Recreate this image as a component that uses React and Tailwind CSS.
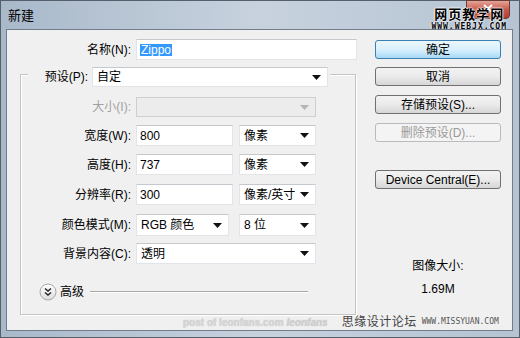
import React from 'react';

const FONT = "font-['Liberation_Sans','Noto_Sans_CJK_SC',sans-serif]";

function Arrow({ disabled }) {
  return (
    <svg width="9" height="5" viewBox="0 0 9 5" className="shrink-0">
      <path d="M0 0h9L4.5 5z" fill={disabled ? '#b4b4b4' : '#111'} />
    </svg>
  );
}

function Input({ value, w, selected }) {
  return (
    <div
      className={`h-[21px] bg-white border border-[#e1e5ea] border-t-[#c5c9ce] flex items-center pl-[3px] ${w}`}
    >
      {selected ? <span className="bg-[#3399ff] text-white px-[1px]">{value}</span> : <span>{value}</span>}
    </div>
  );
}

function Combo({ value, w, h = 'h-[21px]', disabled }) {
  return (
    <div
      className={`${h} ${w} flex items-center justify-between pl-[4px] pr-[6px] border ${
        disabled ? 'bg-[#ececec] border-[#cfcfcf]' : 'bg-white border-[#e1e5ea] border-t-[#c5c9ce]'
      }`}
    >
      <span className="whitespace-nowrap">{value}</span>
      <Arrow disabled={disabled} />
    </div>
  );
}

function Row({ label, children, mt, disabled }) {
  return (
    <div className={`flex items-center ${mt}`}>
      <div className={`w-[115px] text-right pr-[5px] whitespace-nowrap ${disabled ? 'text-[#a0a0a0]' : 'text-black'}`}>{label}</div>
      {children}
    </div>
  );
}

function Btn({ children, mt, primary, disabled }) {
  let cls = 'border-[#707070] bg-gradient-to-b from-[#f2f2f2] via-[#ebebeb] to-[#d6d6d6] text-black';
  if (primary) cls = 'border-[#3c7fb1] bg-gradient-to-b from-[#eaf6fd] via-[#d9f0fc] to-[#a7d9f5] text-black';
  if (disabled) cls = 'border-[#b8bcc0] bg-[#f4f4f4] text-[#9a9a9a]';
  return (
    <div className={`h-[19px] w-[126px] rounded-[3px] border flex items-center justify-center whitespace-nowrap ${cls} ${mt}`}>
      {children}
    </div>
  );
}

export default function App() {
  return (
    <div className={`w-[520px] h-[338px] overflow-hidden ${FONT} text-[12px] leading-none`}>
      <div className="relative w-[520px] h-[338px] flex flex-col bg-gradient-to-r from-[#a9b9ca] via-[#c7d2de] to-[#b5c3d2] border border-[#55606c] pl-[5px] pr-[6px] pb-[6px]">
        {/* title bar */}
        <div className="h-[28px] flex items-center pl-[2px] text-[13px] text-black">新建</div>

        {/* close button + watermark */}
        <div className="absolute right-[9px] top-[-1px] w-[44px] h-[19px] rounded-b-[4px] bg-gradient-to-b from-[#e3a49a] via-[#c9584a] to-[#b8392a] border border-[#6b3b36] flex items-start justify-center">
          <svg width="10" height="9" viewBox="0 0 10 9" className="mt-[3px]">
            <path d="M1 1l8 7M9 1L1 8" stroke="#fff" strokeWidth="2" />
          </svg>
        </div>
        <div className="absolute right-[12px] top-[7px] flex flex-col items-center">
          <span className="text-[13px] text-black font-bold tracking-[1px] [text-shadow:0_0_2px_#fff,0_0_2px_#fff,0_0_2px_#fff]">网页教学网</span>
          <span className="text-[8px] text-black font-bold tracking-[1px] mt-[2px] font-['DejaVu_Sans_Mono',monospace] [text-shadow:0_0_2px_#fff,0_0_2px_#fff]">WWW.WEBJX.COM</span>
        </div>

        {/* client area */}
        <div className="relative flex-1 bg-[#f0f0f0] border border-[#6f7d8c] flex">
          {/* left column */}
          <div className="w-[350px] flex flex-col">
            <div className="flex items-center mt-[9px]">
              <div className="w-[129px] text-right pr-[5px]">名称(N):</div>
              <Input value="Zippo" w="w-[221px]" selected />
            </div>

            {/* group box */}
            <div className="ml-[13px] mt-[14px] w-[336px] h-[241px] border border-[#c4c4c4] shadow-[inset_1px_1px_0_#fff,1px_1px_0_#fff] flex flex-col">
              <div className="-mt-[8px] ml-[7px] self-start flex items-center bg-[#f0f0f0] pr-[2px]">
                <div className="w-[64px] text-right pr-[4px]">预设(P):</div>
                <Combo value="自定" w="w-[236px]" h="h-[20px]" />
              </div>

              <Row label="大小(I):" mt="mt-[10px]" disabled>
                <Combo value="" w="w-[180px]" h="h-[20px]" disabled />
              </Row>
              <Row label="宽度(W):" mt="mt-[8px]">
                <Input value="800" w="w-[97px]" />
                <div className="w-[6px]" />
                <Combo value="像素" w="w-[77px]" />
              </Row>
              <Row label="高度(H):" mt="mt-[8px]">
                <Input value="737" w="w-[97px]" />
                <div className="w-[6px]" />
                <Combo value="像素" w="w-[77px]" />
              </Row>
              <Row label="分辨率(R):" mt="mt-[9px]">
                <Input value="300" w="w-[97px]" />
                <div className="w-[6px]" />
                <Combo value="像素/英寸" w="w-[77px]" />
              </Row>
              <Row label="颜色模式(M):" mt="mt-[9px]">
                <Combo value="RGB 颜色" w="w-[93px]" h="h-[22px]" />
                <div className="w-[10px]" />
                <Combo value="8 位" w="w-[77px]" h="h-[22px]" />
              </Row>
              <Row label="背景内容(C):" mt="mt-[7px]">
                <Combo value="透明" w="w-[180px]" />
              </Row>

              <div className="flex items-center mt-[19px] ml-[18px]">
                <svg width="18" height="18" viewBox="0 0 18 18" className="shrink-0">
                  <defs>
                    <linearGradient id="cg" x1="0" y1="0" x2="0" y2="1">
                      <stop offset="0" stopColor="#ffffff" />
                      <stop offset="1" stopColor="#dcdcdc" />
                    </linearGradient>
                  </defs>
                  <circle cx="9" cy="9" r="8" fill="url(#cg)" stroke="#a9a9a9" />
                  <path d="M6 5.5l3 2.5 3-2.5M6 9.5l3 2.5 3-2.5" fill="none" stroke="#222" strokeWidth="1.4" />
                </svg>
                <span className="ml-[3px]">高级</span>
                <div className="ml-[6px] w-[218px] h-[2px] border-t border-[#a8a8a8] border-b-white border-b" />
              </div>
            </div>
          </div>

          {/* right column */}
          <div className="ml-[18px] flex flex-col">
            <Btn mt="mt-[10px]" primary>确定</Btn>
            <Btn mt="mt-[8px]">取消</Btn>
            <Btn mt="mt-[9px]">存储预设(S)...</Btn>
            <Btn mt="mt-[9px]" disabled>删除预设(D)...</Btn>
            <Btn mt="mt-[28px]">Device Central(E)...</Btn>
            <div className="mt-[71px] text-center">图像大小:</div>
            <div className="mt-[11px] text-center">1.69M</div>
          </div>

          {/* bottom watermarks */}
          <div className="absolute left-[176px] bottom-[2px] flex items-end whitespace-nowrap">
            <span className="text-[10px] text-[#d6d6d6] font-bold [text-shadow:0_0_1px_#bbb]">post of leonfans.com</span>
            <span className="ml-[3px] text-[10px] text-[#d0d0d0] italic font-bold [text-shadow:0_0_1px_#bbb]">leonfans</span>
            <span className="ml-[14px] text-[12px] text-[#444] tracking-[0.5px]">思缘设计论坛</span>
            <span className="ml-[5px] text-[8px] text-[#555] mb-[2px] font-['DejaVu_Sans_Mono',monospace]">WWW.MISSYUAN.COM</span>
          </div>
        </div>
      </div>
    </div>
  );
}
